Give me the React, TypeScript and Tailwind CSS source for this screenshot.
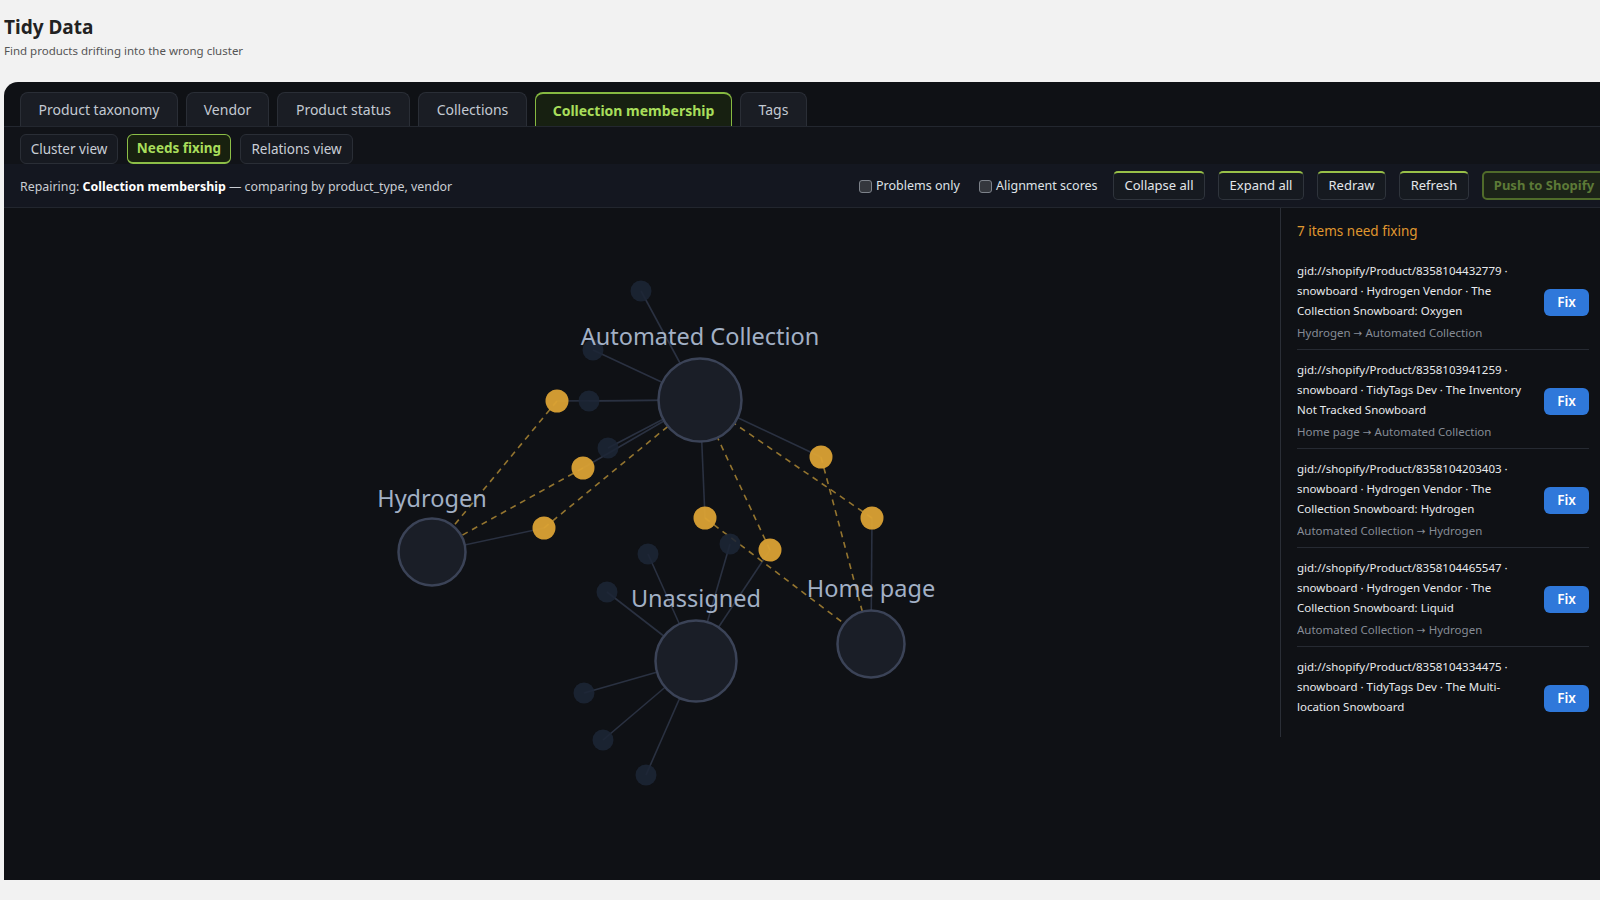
import React from "react";

const tabs = [
  { label: "Product taxonomy", w: "w-[158px]" },
  { label: "Vendor", w: "w-[83px]" },
  { label: "Product status", w: "w-[133px]" },
  { label: "Collections", w: "w-[109px]" },
  { label: "Collection membership", w: "w-[197px]", active: true },
  { label: "Tags", w: "w-[67px]" },
];

const items: { text: string; from?: string; to?: string }[] = [
  {
    text: "gid://shopify/Product/8358104432779 · snowboard · Hydrogen Vendor · The Collection Snowboard: Oxygen",
    from: "Hydrogen",
    to: "Automated Collection",
  },
  {
    text: "gid://shopify/Product/8358103941259 · snowboard · TidyTags Dev · The Inventory Not Tracked Snowboard",
    from: "Home page",
    to: "Automated Collection",
  },
  {
    text: "gid://shopify/Product/8358104203403 · snowboard · Hydrogen Vendor · The Collection Snowboard: Hydrogen",
    from: "Automated Collection",
    to: "Hydrogen",
  },
  {
    text: "gid://shopify/Product/8358104465547 · snowboard · Hydrogen Vendor · The Collection Snowboard: Liquid",
    from: "Automated Collection",
    to: "Hydrogen",
  },
  {
    text: "gid://shopify/Product/8358104334475 · snowboard · TidyTags Dev · The Multi-location Snowboard",
  },
];

type P = [number, number];
const AC: P = [700, 400];
const HY: P = [432, 552];
const UN: P = [696, 661];
const HP: P = [871, 644];

const dark: P[] = [
  [641, 291],
  [593, 350],
  [589, 401],
  [608, 448],
  [648, 554],
  [730, 544],
  [607, 592],
  [584, 693],
  [603, 740],
  [646, 775],
];
const Y1: P = [557, 401];
const Y2: P = [583, 468];
const Y3: P = [544, 528];
const Y4: P = [821, 457];
const Y5: P = [872, 518];
const Y6: P = [705, 518];
const Y7: P = [770, 550];
const yellow: P[] = [Y1, Y2, Y3, Y4, Y5, Y6, Y7];

const solid: [P, P][] = [
  [AC, dark[0]],
  [AC, dark[1]],
  [AC, dark[2]],
  [AC, dark[3]],
  [AC, Y1],
  [AC, Y2],
  [AC, Y4],
  [AC, Y6],
  [HY, Y3],
  [UN, dark[4]],
  [UN, dark[5]],
  [UN, dark[6]],
  [UN, dark[7]],
  [UN, dark[8]],
  [UN, dark[9]],
  [UN, Y7],
  [HP, Y5],
];
const dashed: [P, P][] = [
  [Y1, HY],
  [Y2, HY],
  [Y3, AC],
  [Y4, HP],
  [Y5, AC],
  [Y6, HP],
  [Y7, AC],
];

function Graph() {
  const big: { p: P; r: number; label: string; ly: number }[] = [
    { p: AC, r: 41.5, label: "Automated Collection", ly: 345 },
    { p: HY, r: 33.5, label: "Hydrogen", ly: 507 },
    { p: UN, r: 40.5, label: "Unassigned", ly: 607 },
    { p: HP, r: 33.5, label: "Home page", ly: 597 },
  ];
  return (
    <svg width="1276" height="672" viewBox="4 208 1276 672" className="block">
      {solid.map(([a, b], i) => (
        <line key={"s" + i} x1={a[0]} y1={a[1]} x2={b[0]} y2={b[1]} stroke="#2a3141" strokeWidth="1.6" />
      ))}
      {dashed.map(([a, b], i) => (
        <line
          key={"d" + i}
          x1={a[0]}
          y1={a[1]}
          x2={b[0]}
          y2={b[1]}
          stroke="#94752f"
          strokeWidth="1.6"
          strokeDasharray="6 5"
        />
      ))}
      {dark.map((p, i) => (
        <circle key={"n" + i} cx={p[0]} cy={p[1]} r="10.5" fill="#1d2535" fillOpacity="0.88" />
      ))}
      {yellow.map((p, i) => (
        <circle key={"y" + i} cx={p[0]} cy={p[1]} r="11.5" fill="#dba234" fillOpacity="0.95" />
      ))}
      {big.map((b, i) => (
        <circle key={"b" + i} cx={b.p[0]} cy={b.p[1]} r={b.r} fill="#1a1e27" stroke="#3b4357" strokeWidth="2.5" />
      ))}
      {big.map((b, i) => (
        <text
          key={"t" + i}
          x={b.p[0]}
          y={b.ly}
          textAnchor="middle"
          fill="#a2b0c5"
          fontSize="23.5"
          fontFamily="'Noto Sans', sans-serif"
        >
          {b.label}
        </text>
      ))}
    </svg>
  );
}

function Checkbox({ label, w }: { label: string; w: string }) {
  return (
    <label className={`flex items-center gap-[4px] flex-none ${w}`}>
      <span className="w-[13px] h-[13px] rounded-[3px] border border-[#7c8189] bg-[#34373d] flex-none" />
      <span className="text-[12.5px] text-[#dfe2e6] whitespace-nowrap">{label}</span>
    </label>
  );
}

function Btn({ label, w }: { label: string; w: string }) {
  return (
    <button
      className={`${w} h-[29px] flex-none rounded-[5px] border border-[#2f343c] border-t-2 border-t-[#98c048] bg-[#161a20] text-[13px] text-[#e3e6ea] whitespace-nowrap`}
    >
      {label}
    </button>
  );
}

export default function App() {
  return (
    <div
      className="w-[1600px] h-[900px] overflow-hidden bg-[#f2f2f2]"
      style={{ fontFamily: "'Noto Sans', 'Open Sans', sans-serif" }}
    >
      <div className="pl-1 pt-[14px]">
        <h1 className="text-[19px] leading-[26px] font-bold text-[#222]">Tidy Data</h1>
        <p className="mt-[3px] text-[11.5px] leading-[16px] text-[#555]">Find products drifting into the wrong cluster</p>
      </div>

      <div className="ml-1 mt-[23px] w-[1618px] h-[798px] bg-[#0f1115] rounded-t-[14px] overflow-hidden flex flex-col">
        {/* main tabs */}
        <div className="flex gap-2 px-4 pt-[10px] border-b border-[#23272f]">
          {tabs.map((t) =>
            t.active ? (
              <div
                key={t.label}
                className={`${t.w} h-[34px] flex items-center justify-center rounded-t-[8px] border border-b-0 border-[#86b941] border-t-2 bg-[#172011] text-[14px] font-bold text-[#a8de5b] whitespace-nowrap`}
              >
                {t.label}
              </div>
            ) : (
              <div
                key={t.label}
                className={`${t.w} h-[34px] flex items-center justify-center rounded-t-[8px] border border-b-0 border-[#2a2e36] bg-[#1a1d24] text-[14px] text-[#c3c9d2] whitespace-nowrap`}
              >
                {t.label}
              </div>
            )
          )}
        </div>

        {/* sub tabs */}
        <div className="flex gap-[9px] px-4 pt-[7px] bg-[#111318]">
          <div className="w-[98px] h-[30px] flex items-center justify-center rounded-[6px] border border-[#2a2e36] bg-[#171a21] text-[13.5px] text-[#c9ced6]">
            Cluster view
          </div>
          <div className="w-[104px] h-[30px] flex items-center justify-center rounded-[6px] border border-[#8cbe47] border-b-2 bg-[#18210f] text-[13.5px] font-bold text-[#a8de5b]">
            Needs fixing
          </div>
          <div className="w-[113px] h-[30px] flex items-center justify-center rounded-[6px] border border-[#2a2e36] bg-[#171a21] text-[13.5px] text-[#c9ced6]">
            Relations view
          </div>
        </div>

        {/* repair bar */}
        <div className="h-[44px] flex items-center px-4 bg-[#141720] border-b border-[#22262e]">
          <div className="flex-1 min-w-0 pt-[3px] text-[12.4px] text-[#c9cdd3] whitespace-nowrap">
            Repairing: <span className="font-bold text-white">Collection membership</span> — comparing by product_type, vendor
          </div>
          <div className="flex items-center flex-none pt-[2px]">
            <Checkbox label="Problems only" w="w-[98px]" />
            <div className="w-[22px] flex-none" />
            <Checkbox label="Alignment scores" w="w-[121px]" />
            <div className="flex items-center gap-[13px] ml-[13px] -mt-[2px]">
              <Btn label="Collapse all" w="w-[92px]" />
              <Btn label="Expand all" w="w-[86px]" />
              <Btn label="Redraw" w="w-[69px]" />
              <Btn label="Refresh" w="w-[70px]" />
              <button className="w-[124px] h-[29px] flex-none rounded-[5px] border-2 border-[#506b2a] bg-[#1c2318] text-[13px] font-bold text-[#5d7a37] whitespace-nowrap">
                Push to Shopify
              </button>
            </div>
          </div>
        </div>

        {/* body */}
        <div className="flex flex-1 min-h-0">
          <div className="w-[1276px] flex-none">
            <Graph />
          </div>
          <div className="w-[326px] h-[529px] flex-none border-l border-[#2a2e36] pl-4 pr-[17px] pt-[13px]">
            <div className="text-[13.5px] leading-[20px] text-[#e0982f]">7 items need fixing</div>
            <div className="mt-[10px] h-[468px] overflow-hidden">
              {items.map((it, i) => (
                <div
                  key={i}
                  className={`flex items-center justify-between pt-[10px] pb-[6px] ${
                    i < items.length - 1 ? "border-b border-[#262a32]" : ""
                  }`}
                >
                  <div className="w-[232px]">
                    <div className="text-[11.5px] leading-[20px] text-[#e8eaed]">{it.text}</div>
                    {it.from ? (
                      <div className="mt-[2px] text-[11.5px] leading-[20px] text-[#868c96]">
                        {it.from} <span className="font-['DejaVu_Sans'] text-[10.5px]">→</span> {it.to}
                      </div>
                    ) : (
                      <div className="mt-[2px] h-[20px]" />
                    )}
                  </div>
                  <button className="w-[45px] h-[27px] rounded-[6px] bg-[#2f78da] text-[13.5px] font-semibold text-white">
                    Fix
                  </button>
                </div>
              ))}
            </div>
          </div>
        </div>
      </div>
    </div>
  );
}
